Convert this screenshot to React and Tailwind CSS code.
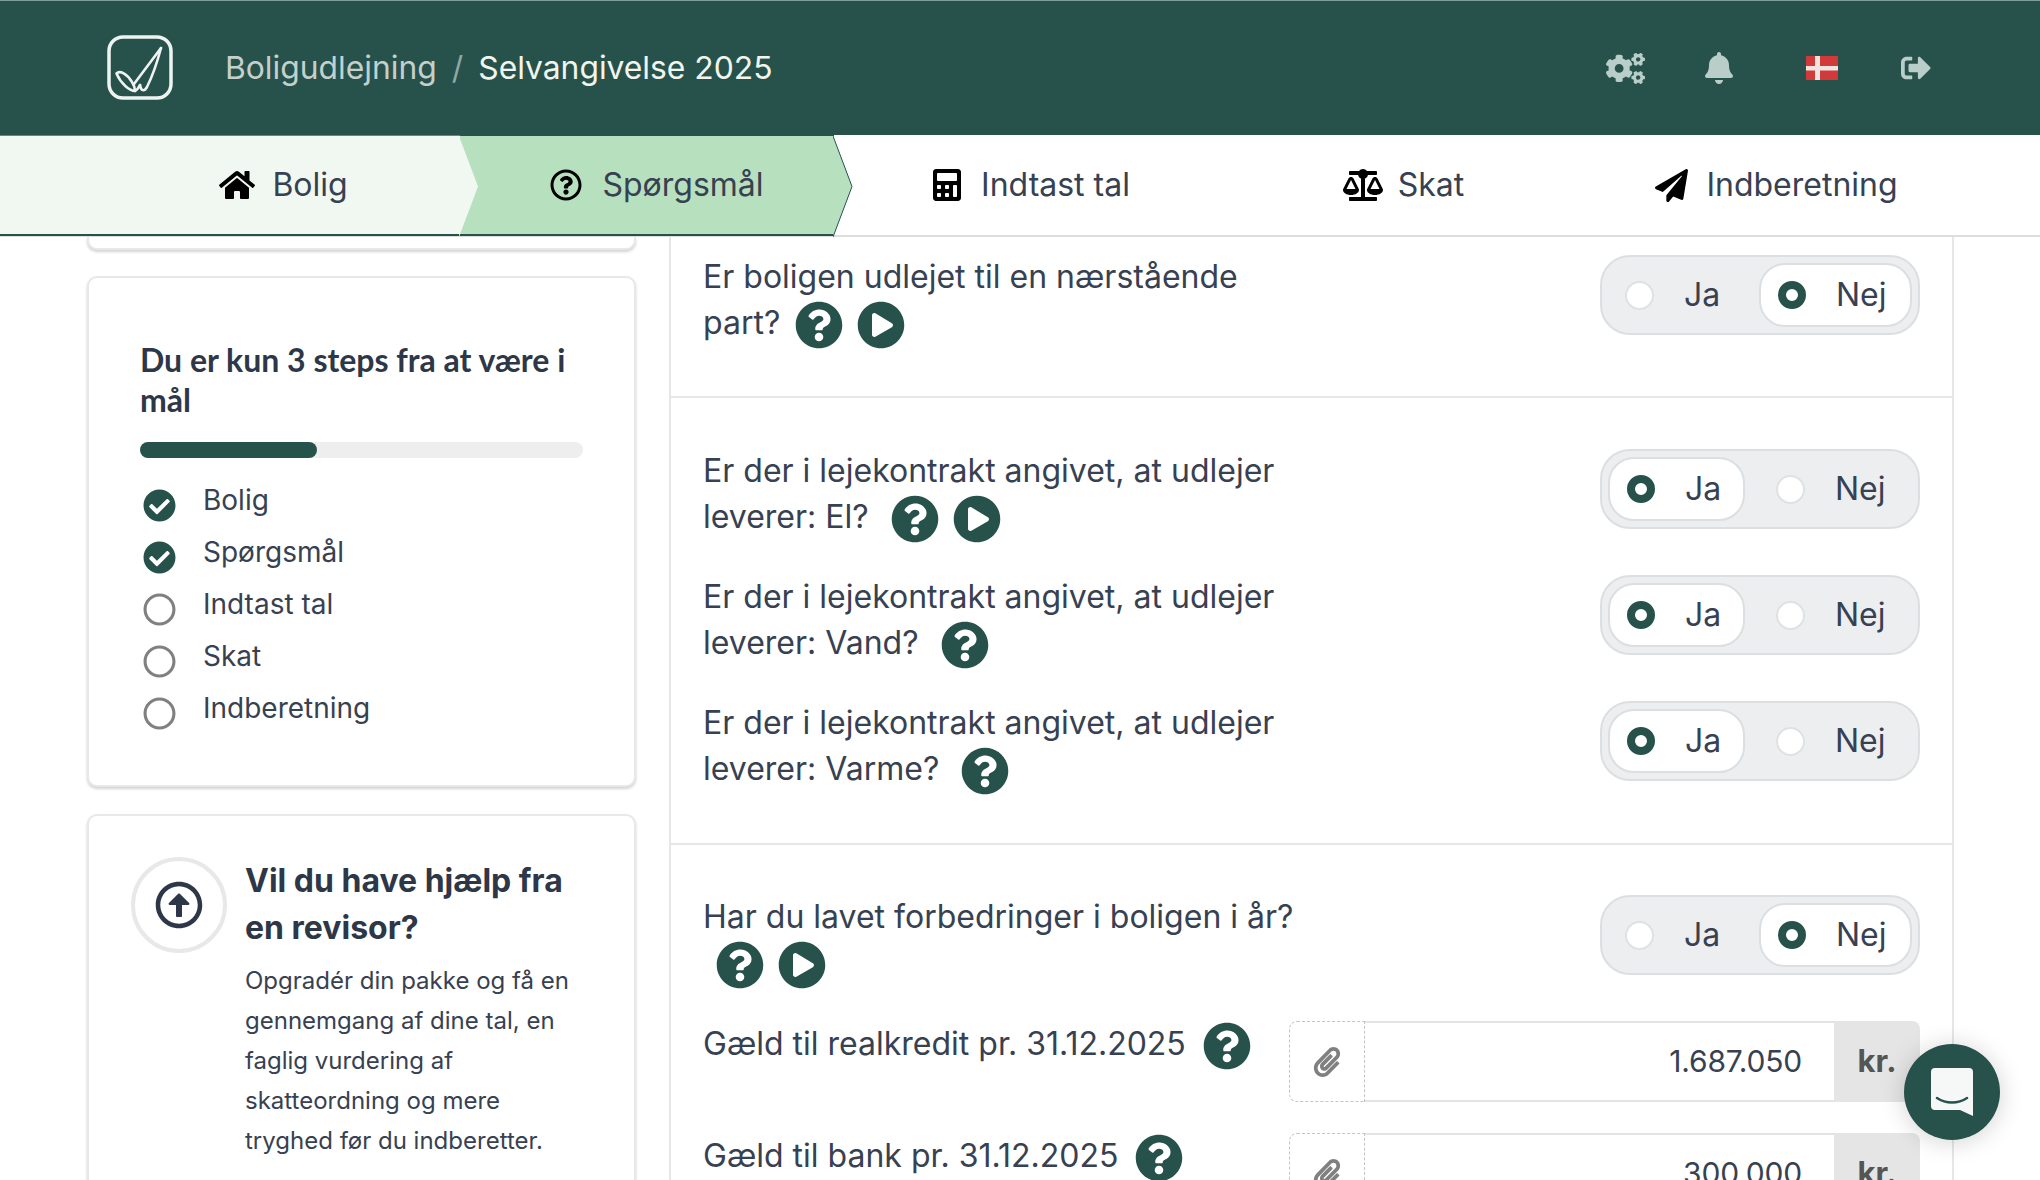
import { FaHome, FaRegQuestionCircle, FaCalculator, FaBalanceScale, FaPaperPlane, FaCogs, FaBell, FaSignOutAlt, FaQuestionCircle, FaPlayCircle, FaCheckCircle, FaRegCircle, FaPaperclip, FaRegArrowAltCircleUp } from 'react-icons/fa';

const tabs = [
    { label: 'Indtast tal', icon: FaCalculator, size: 32, gap: 'gap-[18px]', width: 'w-[373px] pl-[20px]' },
    { label: 'Skat', icon: FaBalanceScale, size: 40, gap: 'gap-[15px]', width: 'w-[373px] pl-[20px]' },
    { label: 'Indberetning', icon: FaPaperPlane, size: 33, gap: 'gap-[18px]', width: 'flex-1 pl-[20px] pr-[87px]' },
];

const steps = [
    { label: 'Bolig', done: true },
    { label: 'Spørgsmål', done: true },
    { label: 'Indtast tal', done: false },
    { label: 'Skat', done: false },
    { label: 'Indberetning', done: false },
];

const Logo = () => (
    <svg width="66" height="66" viewBox="0 0 66 66" fill="none" stroke="#eef3f1" strokeWidth="2.6" strokeLinejoin="round" strokeLinecap="round" className="shrink-0">
        <rect x="2" y="2" width="62" height="61" rx="14" strokeWidth="3.5" />
        <path d="M9.5 38.5C13 35 20 39 25 47C27 50 28 54 28 56C23 56 14 49 9.5 38.5Z" />
        <path d="M54 13L27 49" />
        <path d="M54 13C50 28 45 42 40 52C37 57 34 56 33 50" />
        <path d="M28 56C30 55 32 52 33 50" />
    </svg>
);

const Flag = () => (
    <svg width="32" height="24" viewBox="0 0 32 24" className="ml-[71px] mr-[29px]">
        <rect width="32" height="24" rx="1" fill="#d23a3a" />
        <rect x="9" width="5" height="24" fill="#f0e4e2" />
        <rect y="10" width="32" height="4.5" fill="#f0e4e2" />
    </svg>
);

const TabTip = ({ fill, stroke }) => (
    <svg width="20" height="101" viewBox="0 0 20 101" className="absolute top-0 right-[-19px] z-10">
        <path d="M0 0L19 50.5L0 101Z" fill={fill} />
        {stroke && <path d="M0 0L19 50.5L0 101" fill="none" stroke={stroke} strokeWidth="1" />}
    </svg>
);

const Radio = ({ on }) => (
    on
        ? <span className="w-[28px] h-[28px] rounded-full border-[8px] border-[#27524b] bg-white shrink-0"></span>
        : <span className="w-[29px] h-[29px] rounded-full border-2 border-[#dfe1e3] bg-white shrink-0"></span>
);

const Toggle = ({ value }) => (
    <div className="w-[320px] h-[80px] mt-px shrink-0 flex gap-[14px] p-[6px] rounded-[30px] bg-[#eceeef] border-2 border-[#dcdfe1] text-[32px] text-[#374151]">
        <div className={`w-[137px] flex items-center gap-[30px] pl-[17px] rounded-[26px] ${value === 'ja' ? 'bg-white border-2 border-[#dcdfe1]' : ''}`}>
            <Radio on={value === 'ja'} />
            <span>Ja</span>
        </div>
        <div className={`w-[153px] flex items-center gap-[30px] pl-[17px] rounded-[26px] ${value === 'nej' ? 'bg-white border-2 border-[#dcdfe1]' : ''}`}>
            <Radio on={value === 'nej'} />
            <span>Nej</span>
        </div>
    </div>
);

const Help = ({ className = 'ml-[13px]' }) => <FaQuestionCircle size={48} className={`inline-block align-top text-[#27524b] translate-y-[1px] ${className}`} />;
const Play = () => <FaPlayCircle size={48} className="inline-block align-top ml-[14px] text-[#27524b] translate-y-[1px]" />;

const Question = ({ value, video, helpClass, children, className = '' }) => (
    <div className={`flex justify-between items-start h-[92px] ${className}`}>
        <p className="w-[600px] text-[32px] leading-[46px] text-[#374151]">
            {children} <Help className={helpClass} />{video && <Play />}
        </p>
        <Toggle value={value} />
    </div>
);

const Amount = ({ label, value }) => (
    <div className="flex justify-between items-start mt-[31px] first:mt-[35px]">
        <p className="text-[32px] leading-[46px] text-[#374151]">{label} <Help className="ml-2" /></p>
        <div className="flex w-[631px] h-[81px] shrink-0 text-[#374151]">
            <div className="w-[76px] flex items-center justify-center rounded-l-[8px] border border-dashed border-[#c4c4c4]">
                <FaPaperclip size={30} className="text-[#808080]" />
            </div>
            <div className="flex-1 flex items-center justify-end pr-[32px] border-y-2 border-[#e4e4e4] bg-white text-[30px] tracking-[-0.2px]">{value}</div>
            <div className="w-[86px] flex items-center justify-center rounded-r-[8px] bg-[#e5e5e5] text-[31px] font-bold text-[#555555]">kr.</div>
        </div>
    </div>
);

const Card = ({ className = '', children }) => (
    <div className={`bg-white border-2 border-[#e8e8e8] rounded-[10px] shadow-[0_2px_3px_rgba(0,0,0,0.18)] ${className}`}>
        {children}
    </div>
);

export default function App() {
    return (
        <div className="relative h-[1180px] overflow-hidden bg-white font-['Inter',sans-serif]">
            {/* topbar */}
            <header className="h-[135px] flex items-center justify-between pl-[107px] pr-[109px] bg-[#27524b] border-t border-[#7f9f99]">
                <div className="flex items-center gap-[52px]">
                    <Logo />
                    <div className="flex items-center text-[31.8px]">
                        <span className="text-[#c3d0cc]">Boligudlejning</span>
                        <span className="mx-[15px] text-[#8fa8a3]">/</span>
                        <span className="text-[#f2f5ee]">Selvangivelse 2025</span>
                    </div>
                </div>
                <div className="flex items-center text-[#b9cdc9]">
                    <FaCogs size={39} />
                    <FaBell size={32} className="ml-[58px]" />
                    <Flag />
                    <FaSignOutAlt size={30} className="ml-[34px]" />
                </div>
            </header>

            {/* steps */}
            <nav className="h-[102px] flex border-b-2 border-[#dddddd] text-[32px] text-[#374151]">
                <div className="relative z-20 w-[460px] pl-[107px] flex items-center justify-center gap-[17px] bg-[#f0f8f1] border-b-2 border-[#27524b] -mb-px border-t border-t-[#5f8a7f]">
                    <FaHome size={36} className="text-black" />
                    <span>Bolig</span>
                    <TabTip fill="#f0f8f1" />
                </div>
                <div className="relative z-10 w-[374px] pl-[20px] flex items-center justify-center gap-[20px] bg-[#b7e0bf] border-b-2 border-[#27524b] -mb-px border-t border-t-[#27524b]">
                    <FaRegQuestionCircle size={32} className="text-black" />
                    <span>Spørgsmål</span>
                    <TabTip fill="#b7e0bf" stroke="#27524b" />
                </div>
                {tabs.map((tab) => (
                    <div key={tab.label} className={`${tab.width} ${tab.gap} flex items-center justify-center`}>
                        <tab.icon size={tab.size} className="text-black" />
                        <span>{tab.label}</span>
                    </div>
                ))}
            </nav>

            <main className="flex pl-[87px] pr-[86px]">
                <aside className="w-[549px] shrink-0 mr-[33px]">
                    <div className="h-[13px] bg-white border-x-2 border-b-2 border-[#e8e8e8] rounded-b-[10px] shadow-[0_2px_3px_rgba(0,0,0,0.18)]"></div>
                    <Card className="mt-[26px] h-[511px] pt-[62px] px-[51px]">
                        <h2 className="font-['Lato',sans-serif] font-bold text-[32px] leading-[40px] text-[#2d3748]">Du er kun 3 steps fra at være i mål</h2>
                        <div className="mt-[22px] h-[16px] rounded-full bg-[#eeeeee]">
                            <div className="w-[40%] h-full rounded-full bg-[#27524b]"></div>
                        </div>
                        <ul className="mt-[16px]">
                            {steps.map((step) => (
                                <li key={step.label} className="flex items-start h-[52px] pl-[3px] text-[28px] leading-[52px] text-[#374151]">
                                    {step.done
                                        ? <FaCheckCircle size={33} className="mt-[15px] mr-[27px] shrink-0 text-[#27524b]" />
                                        : <FaRegCircle size={33} className="mt-[15px] mr-[27px] shrink-0 text-[#808080]" />}
                                    <span>{step.label}</span>
                                </li>
                            ))}
                        </ul>
                    </Card>
                    <Card className="mt-[27px] h-[500px] pt-[41px] pl-[42px] pr-[48px] flex items-start gap-[18px] text-[#2d3748]">
                        <div className="w-[96px] h-[96px] shrink-0 flex items-center justify-center rounded-full border-[4px] border-[#e8e8e8]">
                            <FaRegArrowAltCircleUp size={48} />
                        </div>
                        <div>
                            <h3 className="font-bold text-[32px] leading-[47px]">Vil du have hjælp fra en revisor?</h3>
                            <p className="mt-[10px] text-[24px] leading-[40px] text-[#374151]">Opgradér din pakke og få en gennemgang af dine tal, en faglig vurdering af skatteordning og mere tryghed før du indberetter.</p>
                        </div>
                    </Card>
                </aside>

                <section className="flex-1 border-x-2 border-[#e5e7e8] px-[32px]">
                    <div className="pt-[17px] pb-[50px]">
                        <Question value="nej" video helpClass="ml-[6px]">Er boligen udlejet til en nærstående part?</Question>
                    </div>
                    <div className="-mx-[32px] px-[32px] pt-[50px] pb-[51px] border-t-2 border-[#e5e7e8]">
                        <Question value="ja" video>Er der i lejekontrakt angivet, at udlejer leverer: El?</Question>
                        <Question value="ja" className="mt-[34px]">Er der i lejekontrakt angivet, at udlejer leverer: Vand?</Question>
                        <Question value="ja" className="mt-[34px]">Er der i lejekontrakt angivet, at udlejer leverer: Varme?</Question>
                    </div>
                    <div className="-mx-[32px] px-[32px] pt-[49px] border-t-2 border-[#e5e7e8]">
                        <Question value="nej" video helpClass="ml-[13px]">Har du lavet forbedringer i boligen i år?</Question>
                        <div>
                            <Amount label="Gæld til realkredit pr. 31.12.2025" value="1.687.050" />
                            <Amount label="Gæld til bank pr. 31.12.2025" value="300.000" />
                        </div>
                    </div>
                </section>
            </main>

            {/* chat launcher */}
            <button className="absolute left-[1904px] top-[1044px] w-[96px] h-[96px] flex items-center justify-center rounded-full bg-[#27524b] shadow-[0_2px_24px_rgba(0,0,0,0.18)]">
                <svg width="42" height="48" viewBox="0 0 42 48">
                    <path d="M4 0H38A4 4 0 0 1 42 4V48L29 42H4A4 4 0 0 1 0 38V4A4 4 0 0 1 4 0Z" fill="#f6f7f7" />
                    <path d="M6 30C15 36 27 36 36 30" fill="none" stroke="#27524b" strokeWidth="2.5" strokeLinecap="round" />
                </svg>
            </button>
        </div>
    );
}
